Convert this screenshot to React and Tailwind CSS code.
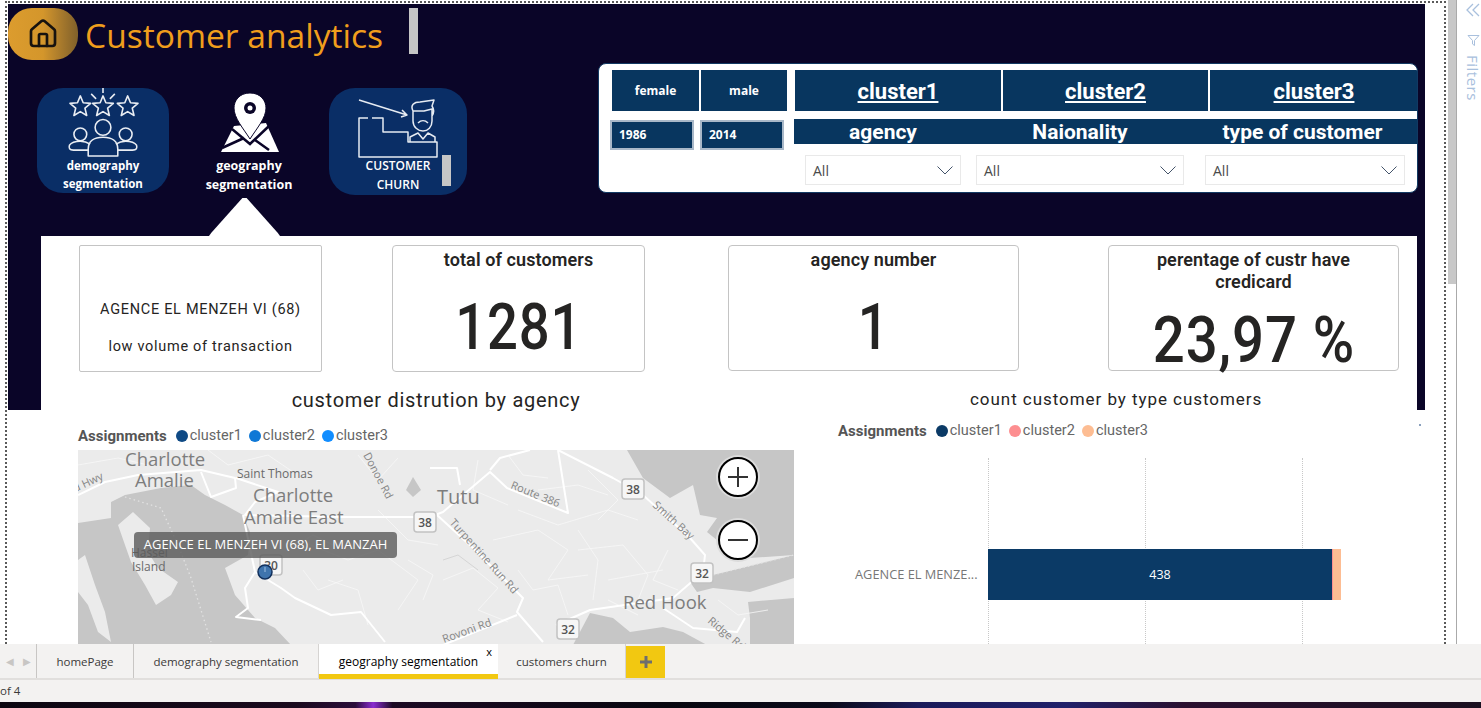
import { Home } from "lucide-react";

const KpiCard = ({ title, value, className, valueClass }) => (
  <div className={`flex flex-col items-center border border-[#c4c4c4] rounded-[4px] bg-white ${className}`}>
    <div className="mt-[3px] w-[240px] text-center text-[18px] leading-[22px] font-semibold tracking-[0.1px] text-[#252423]">
      {title}
    </div>
    <div className={`text-[#252423] font-medium tracking-[1px] whitespace-nowrap ${valueClass}`}>{value}</div>
  </div>
);

const Legend = ({ colors, className }) => (
  <div className={`flex items-center h-[16px] text-[14.5px] text-[#666666] ${className}`}>
    <span className="font-bold text-[15px] text-[#555555] mr-[9px]">Assignments</span>
    {["cluster1", "cluster2", "cluster3"].map((name, i) => (
      <span key={name} className="flex items-center mr-[7px]">
        <span className={`w-[12px] h-[12px] rounded-full mr-[2px] ${colors[i]}`} />
        {name}
      </span>
    ))}
  </div>
);

const Select = ({ className }) => (
  <div className={`flex items-center justify-between h-[30px] px-[7px] pt-[1px] border border-[#e9e9e9] bg-white text-[14px] text-[#4a4a4a] font-['Open_Sans',sans-serif] ${className}`}>
    All
    <svg width="16" height="9" viewBox="0 0 16 9" fill="none" stroke="#44546a" strokeWidth="1">
      <path d="M0.5 0.5 L8 8 L15.5 0.5" />
    </svg>
  </div>
);

const Shield = ({ x, y, n }) => (
  <g>
    <rect x={x - 11} y={y - 10} width="22" height="20" rx="3" fill="#f6f6f6" stroke="#c2c2c2" strokeWidth="1.5" />
    <text x={x} y={y + 4.5} textAnchor="middle" fontSize="12" fontWeight="600" fill="#555">{n}</text>
  </g>
);

// five-pointed star outline for the demography icon
const starPoints = (cx, cy, r) =>
  Array.from({ length: 10 }, (_, i) => {
    const rad = i % 2 ? r * 0.45 : r;
    const a = (Math.PI / 5) * i - Math.PI / 2;
    return `${(cx + rad * Math.cos(a)).toFixed(1)},${(cy + rad * Math.sin(a)).toFixed(1)}`;
  }).join(" ");

const MapCanvas = () => (
  <svg viewBox="0 0 716 194" width="716" height="194" className="block" fontFamily="Open Sans, sans-serif">
    <rect width="716" height="194" fill="#ebebeb" />
    {/* water */}
    <g fill="#c6c6c6">
      <polygon points="33,52 47,45 83,38 113,35 127,45 147,55 165,65 172,82 170,105 147,118 157,145 177,168 197,178 213,195 0,195 0,73 33,68" />
      <polygon points="549,0 716,0 716,105 672,108 645,95 629,82 639,68 622,65 615,35 592,48 565,28" />
      <polygon points="635,125 716,105 716,128 672,142 635,138 619,142 612,132" />
      <polygon points="495,195 512,163 535,168 552,182 585,177 605,182 629,195" />
      <polygon points="670,152 716,148 716,195 672,195 672,168" />
      <polygon points="328,40 335,27 343,40 335,47" />
    </g>
    <g fill="#ebebeb">
      <polygon points="40,75 55,62 72,78 70,102 80,118 100,132 93,145 78,155 67,135 53,112 47,95" />
      <polygon points="0,110 7,105 17,135 27,162 33,192 20,182 10,155 0,142" />
    </g>
    {/* thin roads */}
    <g fill="none" stroke="#f7f7f7" strokeWidth="0.8">
      <path d="M365 130 L395 118 L420 138 L400 160 L430 172" />
      <path d="M500 80 L520 110 L515 150 M500 100 L545 95 L570 125 L560 150" />
      <path d="M415 90 L460 80 L490 100 L470 130 L510 125" />
      <path d="M220 90 L270 110 L300 100 L340 130 L320 160" />
      <path d="M250 130 L280 140 L290 175 M300 60 L330 90 L360 95" />
      <path d="M440 120 L455 140 L480 135 L490 165 M440 60 L480 75 L530 60 L560 70" />
      <path d="M0 15 L40 8 L70 15 M130 0 L150 15 L190 5 L215 22" />
      <path d="M590 100 L575 130 L600 140 M530 130 L585 120" />
      <path d="M280 5 L300 30 L320 8 M430 5 L445 25 L470 28" />
      <path d="M210 100 L235 85 L255 95 M225 120 L240 140 L265 130 M330 110 L355 125 L345 150" />
      <path d="M460 40 L500 35 L530 45 M510 20 L540 50 L520 70 M400 10 L395 40 L430 55" />
      <path d="M640 150 L660 165 L690 160 M530 150 L560 165" />
    </g>
    <path d="M400 120 L380 105 L365 110" fill="none" stroke="#d5d5d5" strokeWidth="1" />
    <path d="M47 47 L83 58 L100 95 L113 128 L133 192 M635 125 L716 105" fill="none" stroke="#e2e2e2" strokeWidth="1.3" strokeDasharray="1.5 3" />
    {/* main roads */}
    <g fill="none" stroke="#ffffff" strokeWidth="2" strokeLinejoin="round">
      <path d="M0 45 L27 32 L60 25 L123 20 L157 28 L158 38 L133 47 L123 22" />
      <path d="M158 28 L200 42 L177 52 L167 65 L267 67 L352 67 L365 62 L412 22 L429 38 L490 63 L480 0" />
      <path d="M352 18 L379 18 L382 35 M412 20 L422 8 L452 0" />
      <path d="M480 0 L535 28 L565 45 L612 88 L627 105 L625 122 L595 148 L512 160 L478 175" />
      <path d="M359 65 L395 98 L445 148 L439 162 L465 192 M365 195 L439 165" />
      <path d="M585 158 L615 178 L659 182 L667 168" />
      <path d="M165 65 L177 122 L167 138 L170 158 L158 167 L183 170" />
      <path d="M177 122 L203 138 L217 148 L253 165 L283 162 L307 192" />
    </g>
    {/* labels */}
    <g fill="#7d7d7d" fontSize="18.5">
      <text x="47" y="16">Charlotte</text>
      <text x="57" y="37">Amalie</text>
      <text x="175" y="52">Charlotte</text>
      <text x="166" y="74">Amalie East</text>
      <text x="359" y="54" fontSize="20">Tutu</text>
      <text x="545" y="159">Red Hook</text>
      <text x="159" y="28" fontSize="12" fill="#6a6a6a">Saint Thomas</text>
      <text x="53" y="107" fontSize="12" fill="#6a6a6a">Hassel</text>
      <text x="54" y="121" fontSize="12" fill="#6a6a6a">Island</text>
    </g>
    <g fill="#858585" fontSize="11">
      <text x="-3" y="41" transform="rotate(-25 0 41)">d Hwy</text>
      <text transform="translate(285 5) rotate(62)">Donoe Rd</text>
      <text transform="translate(432 38) rotate(22)">Route 386</text>
      <text transform="translate(574 56) rotate(42)">Smith Bay</text>
      <text transform="translate(371 73) rotate(48)">Turpentine Run Rd</text>
      <text transform="translate(366 193) rotate(-20)">Rovoni Rd</text>
      <text transform="translate(629 172) rotate(40)">Ridge Rd</text>
    </g>
    <Shield x={347} y={72} n="38" />
    <Shield x={555} y={39} n="38" />
    <Shield x={624} y={123} n="32" />
    <Shield x={490} y={179} n="32" />
    <Shield x={193} y={115} n="30" />
    <circle cx="187" cy="122" r="7" fill="#3f74ad" stroke="#12305c" strokeWidth="1.5" />
    <path d="M187 117 V122" stroke="#9fc0e3" strokeWidth="1" />
  </svg>
);

const ZoomButton = ({ minus, className }) => (
  <div className={`absolute left-[640px] w-[40px] h-[40px] flex items-center justify-center rounded-full bg-white border-2 border-black ring-2 ring-[#dcdcdc] ${className}`}>
    <svg width="22" height="22" viewBox="0 0 22 22" stroke="#333" strokeWidth="2">
      <path d="M1 11 H21" />
      {!minus && <path d="M11 1 V21" />}
    </svg>
  </div>
);

export default function App() {
  return (
    <div className="w-[1481px] h-[708px] flex flex-col overflow-hidden bg-white font-[Roboto,sans-serif]">
      <div className="h-[644px] flex shrink-0">
        {/* report canvas */}
        <div className="ml-[5px] mt-[1px] w-[1442px] h-[643px] pl-[1px] pt-[1px] border-2 border-b-0 border-dotted border-[#5a5a5a] overflow-hidden">
          <div className="relative w-[1417px] h-[406px] bg-[#0a0528]">
            <div className="h-[232px] flex">
              {/* left header */}
              <div className="w-[590px]">
                <div className="flex h-[56px] mt-[4px]">
                  <div className="w-[70px] h-[52px] rounded-[24px] bg-gradient-to-r from-[#dc9c2e] via-[#d4962b] to-[#80602a] flex items-center justify-center">
                    <Home size={32} strokeWidth={2} color="#17130f" />
                  </div>
                  <div className="ml-[7px] mt-[2px] w-[324px] text-[33.6px] leading-[50px] text-[#f09e1c] font-['Open_Sans',sans-serif]">
                    Customer analytics
                  </div>
                  <div className="w-[9px] h-[46px] bg-[#c6c6c6]" />
                </div>
                <div className="flex mt-[24px] ml-[29px] items-start">
                  <div className="w-[132px] h-[105px] rounded-[26px] bg-[#0a2e66] flex flex-col items-center">
                    <svg width="74" height="70" viewBox="0 0 74 70" fill="none" stroke="#e9edf3" strokeWidth="1.6" strokeLinejoin="round">
                      <path d="M37 0 V5 M25 6 L30 11 M49 6 L44 11" />
                      <polygon points={starPoints(14, 19, 11)} />
                      <polygon points={starPoints(37, 19, 11)} />
                      <polygon points={starPoints(62, 19, 11)} />
                      <circle cx="37" cy="40" r="8" />
                      <path d="M22 69 V62 C22 54 28 50 37 50 C46 50 52 54 52 62 V69 Z" />
                      <circle cx="14" cy="47" r="6.5" />
                      <circle cx="60" cy="47" r="6.5" />
                      <path d="M22 63 H7 C3 63 2 61 3 58 C5 55 9 54 14 54 C18 54 21 55 24 57" />
                      <path d="M52 63 H67 C71 63 72 61 71 58 C69 55 65 54 60 54 C56 54 53 55 50 57" />
                    </svg>
                    <div className="text-center text-[11.5px] leading-[18px] font-bold text-white font-['Open_Sans',sans-serif]">
                      demography
                      <br />
                      segmentation
                    </div>
                  </div>
                  <div className="ml-[28px] w-[104px] flex flex-col items-center">
                    <svg width="60" height="60" viewBox="0 0 60 60" className="mt-[5px]" fill="#ffffff">
                      <polygon points="15,33 47,30 60,59 2,59" />
                      <path d="M13 36 L31 51 L50 33 M3 55 L25 45 M36 47 L50 57" fill="none" stroke="#0a0528" strokeWidth="2.5" />
                      <path d="M31 0 C20 0 15 8 15 15 C15 25 24 35 31 46 C38 35 47 25 47 15 C47 8 42 0 31 0 Z" stroke="#0a0528" strokeWidth="1" />
                      <circle cx="31" cy="15" r="6" fill="#0a0528" />
                      <circle cx="31" cy="15" r="2.5" fill="#ffffff" />
                    </svg>
                    <div className="mt-[4px] text-center text-[12.5px] leading-[18.5px] font-bold text-white whitespace-nowrap font-['Open_Sans',sans-serif]">
                      geography
                      <br />
                      segmentation
                    </div>
                  </div>
                  <div className="relative ml-[28px] w-[138px] h-[107px] rounded-[26px] bg-[#0a2e66] flex flex-col items-center">
                    <svg width="82" height="60" viewBox="0 0 82 60" className="mt-[11px] ml-[2px]" fill="none" stroke="#e6ebf2" strokeWidth="1.5" strokeLinejoin="round">
                      <path d="M1 1 L49 16 M44 11 L49 16 L43 18" />
                      <path d="M10 19 H1 V58 H79 V43 H50 V33 H25 V19 H14" />
                      <path d="M55 12 C52 6 56 3 62 3 L76 1 L74 7 C76 10 76 14 74 17 M55 12 V22 C55 28 60 32 65 32 C70 32 74 28 74 22 V10 L66 12 Z" />
                      <path d="M60 24 C63 21 67 21 70 24" />
                      <path d="M52 43 V38 L60 34 L65 40 L70 34 L77 38 V43" />
                    </svg>
                    <div className="mt-[-3px] text-center text-[12px] leading-[19px] font-semibold text-white font-['Open_Sans',sans-serif]">
                      CUSTOMER
                      <br />
                      CHURN
                    </div>
                    <div className="absolute left-[113px] top-[67px] w-[9px] h-[31px] bg-[#c6c6c6]" />
                  </div>
                </div>
                <div className="ml-[201px] mt-[3px] w-[71px] h-[38px] bg-white [clip-path:polygon(0_100%,3%_92%,47%_0,53%_0,97%_92%,100%_100%)]" />
              </div>

              {/* filter card */}
              <div className="w-[820px] h-[130px] mt-[59px] flex pl-[13px] pt-[6px] bg-white rounded-[8px] border border-[#123a63] overflow-hidden">
                <div className="w-[175px] shrink-0">
                  <div className="flex gap-[2px] text-white text-[12px] font-bold font-['Open_Sans',sans-serif]">
                    <div className="w-[87px] h-[41px] pt-[1px] flex items-center justify-center bg-[#08365f]">female</div>
                    <div className="w-[86px] h-[41px] pt-[1px] flex items-center justify-center bg-[#08365f]">male</div>
                  </div>
                  <div className="flex -ml-[2px] mt-[9px] gap-[6px] text-white text-[12px] font-bold font-['Open_Sans',sans-serif]">
                    <div className="w-[84px] h-[30px] flex items-center pl-[7px] bg-[#08365f] border-2 border-[#a9b8c8]">1986</div>
                    <div className="w-[84px] h-[30px] flex items-center pl-[7px] bg-[#08365f] border-2 border-[#a9b8c8]">2014</div>
                  </div>
                </div>
                <div className="ml-[8px] w-[623px] shrink-0">
                  <div className="flex gap-[2px] text-white text-[22px] font-bold underline">
                    <div className="w-[206px] h-[41px] pt-[2px] flex items-center justify-center bg-[#08365f]">cluster1</div>
                    <div className="w-[205px] h-[41px] pt-[2px] flex items-center justify-center bg-[#08365f]">cluster2</div>
                    <div className="w-[208px] h-[41px] pt-[2px] flex items-center justify-center bg-[#08365f]">cluster3</div>
                  </div>
                  <div className="flex -ml-[1px] mt-[8px] h-[25px] items-center bg-[#08365f] text-white text-[21px] font-bold">
                    <div className="w-[178px] pt-[2px] text-center">agency</div>
                    <div className="w-[216px] pt-[2px] text-center">Naionality</div>
                    <div className="w-[229px] pt-[2px] text-center whitespace-nowrap">type of customer</div>
                  </div>
                  <div className="flex ml-[10px] mt-[11px]">
                    <Select className="w-[156px]" />
                    <Select className="w-[208px] ml-[15px]" />
                    <Select className="w-[200px] ml-[21px]" />
                  </div>
                </div>
              </div>
            </div>

            {/* white panel */}
            <div className="ml-[33px] w-[1376px] h-[174px] bg-white">
              <div className="flex pt-[9px]">
                <div className="ml-[38px] w-[243px] h-[127px] flex flex-col items-center justify-end pb-[16px] gap-[20px] border border-[#c4c4c4] rounded-[2px] text-[14.5px] leading-[17px] tracking-[0.7px] text-[#252423]">
                  <div>AGENCE EL MENZEH VI (68)</div>
                  <div>low volume of transaction</div>
                </div>
                <KpiCard
                  title="total of customers"
                  value="1281"
                  className="ml-[70px] w-[253px] h-[127px]"
                  valueClass="mt-[21px] text-[64px] leading-[72px] scale-x-[0.85]"
                />
                <KpiCard
                  title="agency number"
                  value="1"
                  className="ml-[83px] w-[291px] h-[126px]"
                  valueClass="mt-[21px] text-[64px] leading-[72px] scale-x-[0.85]"
                />
                <KpiCard
                  title="perentage of custr have credicard"
                  value="23,97 %"
                  className="ml-[89px] w-[291px] h-[126px]"
                  valueClass="mt-[12px] text-[64px] leading-[72px] scale-x-[0.88]"
                />
              </div>
              <div className="flex mt-[15px] text-[#252423]">
                <div className="ml-[250px] w-[290px] text-center text-[20px] leading-[26px] tracking-[0.7px] whitespace-nowrap">
                  customer distrution by agency
                </div>
                <div className="ml-[389px] w-[291px] -mt-[1px] text-center text-[17px] leading-[26px] tracking-[0.95px] whitespace-nowrap">
                  count customer by type customers
                </div>
              </div>
            </div>
          </div>

          {/* below the dark block */}
          <div className="flex">
            <div className="ml-[70px] w-[716px] shrink-0">
              <Legend colors={["bg-[#0f4a85]", "bg-[#0f78d6]", "bg-[#118dff]"]} className="mt-[18px]" />
              <div className="relative mt-[6px] h-[194px]">
                <MapCanvas />
                <div className="absolute left-[56px] top-[82px] h-[26px] w-[263px] flex items-center justify-center rounded-[4px] bg-[#5a5a5a]/80 text-[13px] text-white font-['Open_Sans',sans-serif] whitespace-nowrap">
                  AGENCE EL MENZEH VI (68), EL MANZAH
                </div>
                <ZoomButton className="top-[7px]" />
                <ZoomButton minus className="top-[70px]" />
              </div>
            </div>
            <div className="relative ml-[44px] w-[560px] shrink-0">
              <div className="absolute left-[581px] top-[14px] w-[2px] h-[2px] bg-[#8aa0bd]" />
              <Legend colors={["bg-[#0b3a66]", "bg-[#fd8e90]", "bg-[#fdbd93]"]} className="mt-[13px]" />
              <div className="flex mt-[19px]">
                <div className="ml-[17px] w-[133px] h-[186px] flex items-center">
                  <span className="mt-[47px] text-[12.8px] text-[#777777] font-['Open_Sans',sans-serif] whitespace-nowrap">AGENCE EL MENZE...</span>
                </div>
                <div className="relative w-[360px] h-[186px]">
                  <div className="absolute left-0 top-0 h-full border-l border-dotted border-[#c8c8c8]" />
                  <div className="absolute left-[157px] top-0 h-full border-l border-dotted border-[#c8c8c8]" />
                  <div className="absolute left-[314px] top-0 h-full border-l border-dotted border-[#c8c8c8]" />
                  <div className="relative flex w-[353px] h-[51px] mt-[91px] text-white text-[12.5px] font-['Open_Sans',sans-serif]">
                    <div className="w-[344px] pt-[1px] flex items-center justify-center bg-[#0b3a66]">438</div>
                    <div className="w-[1px] bg-[#fd8e90]" />
                    <div className="w-[8px] bg-[#fdbd93]" />
                  </div>
                </div>
              </div>
            </div>
          </div>
        </div>

        {/* scrollbar */}
        <div className="ml-[2px] w-[8px]">
          <div className="w-[8px] h-[284px] bg-[#c8c8c8]" />
        </div>
        <div className="w-px bg-[#aaaaaa]" />

        {/* filters rail */}
        <div className="flex-1 flex flex-col items-center text-[#a9c0dd] pt-[3px] pl-[8px]">
          <svg width="14" height="14" viewBox="0 0 14 14" fill="none" stroke="#a9c0dd" strokeWidth="1.3" className="shrink-0">
            <path d="M7 1 L1 7 L7 13 M13 1 L7 7 L13 13" />
          </svg>
          <svg width="13" height="13" viewBox="0 0 13 13" fill="none" stroke="#a9c0dd" strokeWidth="1" className="mt-[17px] shrink-0">
            <path d="M1 1.5 H12 L7.5 6.5 V11.5 L5.5 10 V6.5 Z" />
          </svg>
          <div className="mt-[8px] text-[15px] leading-[16px] tracking-[0.5px] font-medium [writing-mode:vertical-rl] font-['Open_Sans',sans-serif]">Filters</div>
        </div>
      </div>

      {/* page tabs */}
      <div className="h-[36px] shrink-0 flex bg-[#f3f2f1] border-b-2 border-[#e1dfdd] text-[11.5px] text-[#3b3a39] font-['Open_Sans',sans-serif]">
        <div className="w-[36px] flex items-center justify-around px-[1px] text-[#c8c6c4] text-[10px]">
          <span>◀</span>
          <span>▶</span>
        </div>
        <div className="w-[98px] pt-[2px] flex items-center justify-center border-x border-[#c8c6c4]">homePage</div>
        <div className="w-[185px] pt-[2px] flex items-center justify-center border-r border-[#d6d4d2]">demography segmentation</div>
        <div className="relative w-[179px] h-[35px] pt-[6px] flex items-center justify-center bg-white border-b-[5px] border-[#f2c811] text-[12px] text-black">
          geography segmentation
          <span className="absolute right-[6px] top-[1px] text-[11px] leading-[14px]">x</span>
        </div>
        <div className="w-[128px] pt-[2px] flex items-center justify-center border-r border-[#d6d4d2]">customers churn</div>
        <div className="w-[39px] h-[32px] mt-[2px] flex items-center justify-center bg-[#f2c811]">
          <svg width="12" height="12" viewBox="0 0 12 12" stroke="#6e6e6e" strokeWidth="3">
            <path d="M0 6 H12 M6 0 V12" />
          </svg>
        </div>
      </div>
      <div className="h-[22px] shrink-0 flex items-center bg-[#f3f2f1] text-[11.5px] text-[#3b3a39] font-['Open_Sans',sans-serif]">
        of 4
      </div>
      <div className="flex-1 bg-[linear-gradient(90deg,#0b0610_0%,#1a0a1e_20%,#2a0d3a_24%,#8a2bd0_25.2%,#1c0a24_26.5%,#07070f_45%,#0a0a1a_56%,#1a1a5a_62%,#20206a_72%,#2a1030_80%,#1a1020_100%)]" />
    </div>
  );
}
